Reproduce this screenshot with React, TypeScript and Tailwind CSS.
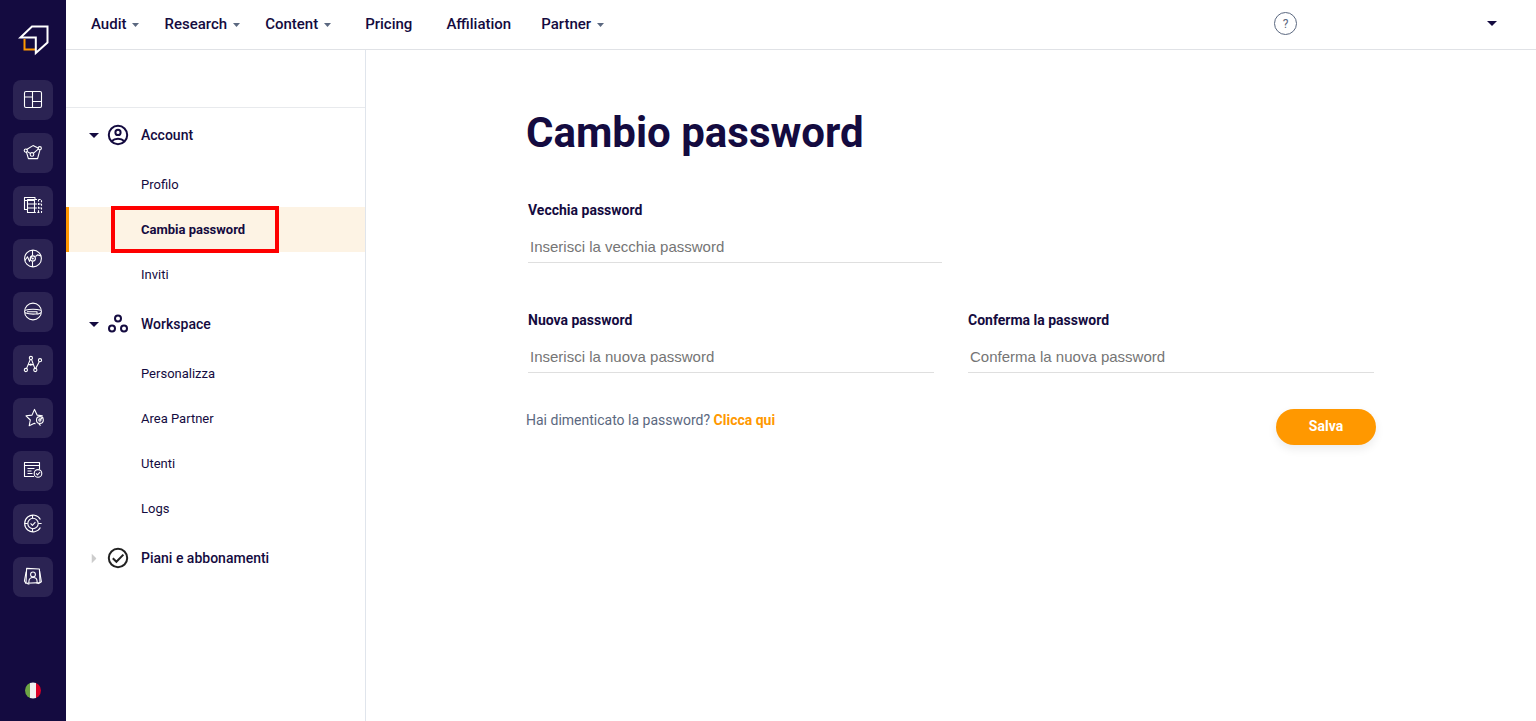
import React from "react";

type Entry = { label: string; active?: boolean };

const railIcons: { name: string; art: React.ReactNode }[] = [
  {
    name: "Dashboard",
    art: (
      <>
        <rect x="1.5" y="1.5" width="17" height="16" rx="1.5" />
        <path d="M9.5 1.5v16M1.5 7h8M9.5 11.5h9" />
      </>
    ),
  },
  {
    name: "Keyword",
    art: (
      <>
        <path d="M3.2 6.8 10 2.6l5.6 2.6M3.4 8.8l2 6.8h9.2l2.4-9M4 8.4l3 1.8M10.6 10.2l4.6-4" />
        <circle cx="2.8" cy="7.6" r="1.6" />
        <circle cx="16.8" cy="5.2" r="1.6" />
        <circle cx="9" cy="11.4" r="1.8" />
      </>
    ),
  },
  {
    name: "Confronto",
    art: (
      <>
        <path d="M12 3.5v-2H1.5v12H4" />
        <path d="M4.5 3.5h7v13h-7zM1.5 4.5h10M4.5 8h7M4.5 12h7" />
        <path d="M12 3.5h6.5v13H12M12 8h6.5M12 12h6.5M15.5 3.5v13" strokeDasharray="2 1.6" />
      </>
    ),
  },
  {
    name: "Visibilità",
    art: (
      <>
        <circle cx="10" cy="9.5" r="8.4" />
        <path d="M9.5 1v5.5M9.5 12.5V18M1.9 11.5 4.5 7.8l2 4.6L9 6.6M12.5 7.5l2-1.6 3.6 1" />
        <circle cx="9.8" cy="9.5" r="2.6" />
        <circle cx="9.8" cy="9.5" r=".5" />
      </>
    ),
  },
  {
    name: "Search",
    art: (
      <>
        <circle cx="10" cy="9.5" r="8.4" />
        <path d="M1.9 8.2q8.1-1.8 16.2 0M1.9 10.8q6 2 12.6 1M4 9.8h10v2.4M18.1 10.8l-3.6 1.4" />
      </>
    ),
  },
  {
    name: "Analisi",
    art: (
      <>
        <path d="m3.6 13.4 3.6-8.8M8.6 4.6l3.2 8.8M5.2 9.6h5M12.8 13.2l3.6-6.6" />
        <circle cx="2.9" cy="15" r="1.6" />
        <circle cx="7.9" cy="3" r="1.6" />
        <circle cx="12.3" cy="15" r="1.6" />
        <circle cx="17" cy="5.2" r="1.6" />
        <circle cx="7.8" cy="9.6" r=".5" />
      </>
    ),
  },
  {
    name: "Preferiti",
    art: (
      <>
        <path d="m12.4 16.2-1-1-5.2 2.6 1.1-5.8L3 7.8l6-.7 2.5-5.7 2.6 5.7 5.6.7" />
        <circle cx="16.9" cy="12" r="3.4" />
        <circle cx="16.9" cy="12" r="1.1" />
        <path d="m17.7 11.2 2.4-2.2M15.9 15.6l1.6 2" />
      </>
    ),
  },
  {
    name: "Contenuti",
    art: (
      <>
        <path d="M11 15.5H1.5v-14h15v7M1.5 4.5h15M4.5 7.5h7M4.5 10h4M4.5 12.5h5" />
        <circle cx="15" cy="12.4" r="3.8" />
        <path d="m13.2 12.4 1.3 1.4 2.6-2.8" />
      </>
    ),
  },
  {
    name: "Obiettivi",
    art: (
      <>
        <path d="M17.4 5.4A8.4 8.4 0 1 0 17.4 13.6" />
        <circle cx="10" cy="9.5" r="5.2" />
        <path d="m7.6 9.4 1.8 1.9 3-3.2M9.5 1v3.2M9.5 14.8V18M1.5 9.5h3.2M15.2 9.5h3.4" />
      </>
    ),
  },
  {
    name: "Persone",
    art: (
      <>
        <path d="M3.6 1.4 16.4 2l.6 13.6-14 .6z" />
        <path d="M3.2 4.6 1.4 14l1.6 2.4M16.6 4l1.8 10.8-3 1.8-2.2-.8M6.4 17.2 4 16.4" />
        <circle cx="10" cy="7.4" r="2.4" />
        <path d="M5.9 16v-1.6c0-5.2 8.2-5.2 8.2 0v1.4" />
      </>
    ),
  },
];

function Caret({ className }: { className: string }) {
  return (
    <svg viewBox="0 0 10 5" preserveAspectRatio="none" className={className} fill="currentColor" aria-hidden="true">
      <path d="M0 0h10L5 5z" />
    </svg>
  );
}

function MenuButton({ label }: { label: string }) {
  return (
    <button type="button" className="flex items-center gap-1.5">
      {label}
      <Caret className="h-1 w-[7px] text-[#5b6880]" />
    </button>
  );
}

function Rail() {
  return (
    <aside className="flex w-[66px] shrink-0 flex-col items-center bg-[#140b40] pt-6 pb-[22px]">
      <a href="#" aria-label="Home">
        <svg width="32" height="32" viewBox="0 0 32 32" fill="none" strokeWidth="2">
          <path d="M7.5 15v10.5H18" stroke="#ff9800" />
          <path d="M3.5 13.5 15 2.5h15.5v16L18.8 29V13.5z" stroke="#fff" />
        </svg>
      </a>
      <nav className="mt-6 flex flex-col gap-[13px]">
        {railIcons.map((icon) => (
          <button
            key={icon.name}
            type="button"
            aria-label={icon.name}
            className="flex size-10 items-center justify-center rounded-lg bg-[#2b2353]"
          >
            <svg
              width="20"
              height="20"
              viewBox="0 0 20 20"
              fill="none"
              stroke="#fff"
              strokeWidth="1.1"
              strokeLinejoin="round"
              className="overflow-visible"
            >
              {icon.art}
            </svg>
          </button>
        ))}
      </nav>
      <button type="button" aria-label="Italiano" className="mt-auto">
        <svg width="16" height="17" viewBox="0 0 16 17">
          <clipPath id="flag">
            <circle cx="8" cy="8.5" r="8" />
          </clipPath>
          <g clipPath="url(#flag)">
            <path fill="#6da544" d="M0 0h5v17H0z" />
            <path fill="#f0f0f0" d="M5 0h6v17H5z" />
            <path fill="#d80027" d="M11 0h5v17h-5z" />
          </g>
        </svg>
      </button>
    </aside>
  );
}

function TopBar() {
  return (
    <header className="flex h-[50px] items-center border-b border-[#e0e2e6] pr-[39px] pl-[25px] text-[15px] font-medium">
      <nav className="flex items-center gap-[34px]">
        <div className="flex items-center gap-[25px]">
          <MenuButton label="Audit" />
          <MenuButton label="Research" />
          <MenuButton label="Content" />
        </div>
        <a href="#">Pricing</a>
        <div className="flex items-center gap-[30px]">
          <a href="#">Affiliation</a>
          <MenuButton label="Partner" />
        </div>
      </nav>
      <div className="ml-auto flex items-center gap-[190px] pb-0.5">
        <button
          type="button"
          aria-label="Aiuto"
          className="flex size-[23px] items-center justify-center rounded-full border border-[#5b6880] text-xs font-normal text-[#5b6880]"
        >
          ?
        </button>
        <button type="button" aria-label="Profilo utente">
          <Caret className="h-[5px] w-[10px]" />
        </button>
      </div>
    </header>
  );
}

function Section({
  label,
  icon,
  items = [],
}: {
  label: string;
  icon: React.ReactNode;
  items?: Entry[];
}) {
  const open = items.length > 0;
  return (
    <section>
      <button
        type="button"
        aria-expanded={open}
        className="flex h-[54px] w-full items-center pl-[23px] text-sm font-medium"
      >
        <span className="flex w-[17px]">
          {open ? (
            <Caret className="h-[5px] w-[10px]" />
          ) : (
            <Caret className="h-[5px] w-[10px] -rotate-90 text-[#cccccc]" />
          )}
        </span>
        <svg width="24" height="24" viewBox="0 0 24 24" fill="none" stroke="currentColor" strokeWidth="2" className="mr-[11px]">
          {icon}
        </svg>
        {label}
      </button>
      {items.map((item) => (
        <a
          key={item.label}
          href="#"
          className={
            item.active
              ? "flex h-[45px] items-center border-l-[3px] border-[#ff9800] bg-[#fdf3e4] pl-[42px] text-[13px] font-bold"
              : "flex h-[45px] items-center pl-[75px] text-[13px]"
          }
        >
          {item.active ? (
            <span className="flex h-[47px] w-[168px] shrink-0 items-center border-4 border-[#fe0000] pl-[26px]">
              {item.label}
            </span>
          ) : (
            item.label
          )}
        </a>
      ))}
    </section>
  );
}

function SettingsMenu() {
  return (
    <aside className="w-[300px] shrink-0 border-r border-[#e0e5ec]">
      <div className="h-[58px] border-b border-[#e8eaed]" />
      <Section
        label="Account"
        icon={
          <>
            <circle cx="12" cy="12" r="9.2" />
            <circle cx="12" cy="9.4" r="2.6" />
            <path d="M5.6 18.2c3.4-3.4 9.4-3.4 12.8 0" />
          </>
        }
        items={[{ label: "Profilo" }, { label: "Cambia password", active: true }, { label: "Inviti" }]}
      />
      <Section
        label="Workspace"
        icon={
          <>
            <circle cx="12" cy="6.4" r="3" />
            <circle cx="6" cy="16.6" r="3" />
            <circle cx="18" cy="16.6" r="3" />
          </>
        }
        items={[{ label: "Personalizza" }, { label: "Area Partner" }, { label: "Utenti" }, { label: "Logs" }]}
      />
      <Section
        label="Piani e abbonamenti"
        icon={
          <g stroke="#222222">
            <circle cx="12" cy="12" r="9.2" />
            <path d="m6.8 12.2 3.6 3.6 7-7.2" />
          </g>
        }
      />
    </aside>
  );
}

function Field({ id, label, placeholder }: { id: string; label: string; placeholder: string }) {
  return (
    <div className="flex flex-col">
      <label htmlFor={id} className="text-sm leading-5 font-bold">
        {label}
      </label>
      <input
        id={id}
        type="password"
        placeholder={placeholder}
        className="mt-3 h-[31px] w-full border-b border-[#dfdfdf] px-0.5 pb-0.5 font-['Liberation_Sans',Arial,sans-serif] text-[15px] outline-none placeholder:text-[#757575]"
      />
    </div>
  );
}

export default function App() {
  return (
    <div className="flex min-h-screen bg-white font-[Roboto,sans-serif] text-[#140b40]">
      <Rail />
      <div className="flex min-w-0 flex-1 flex-col">
        <TopBar />
        <div className="flex flex-1">
          <SettingsMenu />
          <main className="min-w-0 flex-1">
            <form className="mx-auto max-w-[850px] pt-[57px]" onSubmit={(e) => e.preventDefault()}>
              <h1 className="text-[42px] leading-[52px] font-bold">Cambio password</h1>
              <div className="mt-[41px] grid grid-cols-2 gap-x-[34px] gap-y-[47px] px-0.5">
                <div className="-mr-2">
                  <Field id="old" label="Vecchia password" placeholder="Inserisci la vecchia password" />
                </div>
                <div />
                <Field id="new" label="Nuova password" placeholder="Inserisci la nuova password" />
                <Field id="confirm" label="Conferma la password" placeholder="Conferma la nuova password" />
              </div>
              <div className="mt-9 flex items-start justify-between">
                <p className="text-sm leading-[22px] text-[#5b6880]">
                  Hai dimenticato la password?{" "}
                  <a href="#" className="font-bold text-[#ff9800]">
                    Clicca qui
                  </a>
                </p>
                <button
                  type="submit"
                  className="h-9 w-[100px] rounded-full bg-[#ff9800] pb-0.5 text-sm font-bold text-white shadow-[0_4px_10px_rgba(0,0,0,0.08)]"
                >
                  Salva
                </button>
              </div>
            </form>
          </main>
        </div>
      </div>
    </div>
  );
}
